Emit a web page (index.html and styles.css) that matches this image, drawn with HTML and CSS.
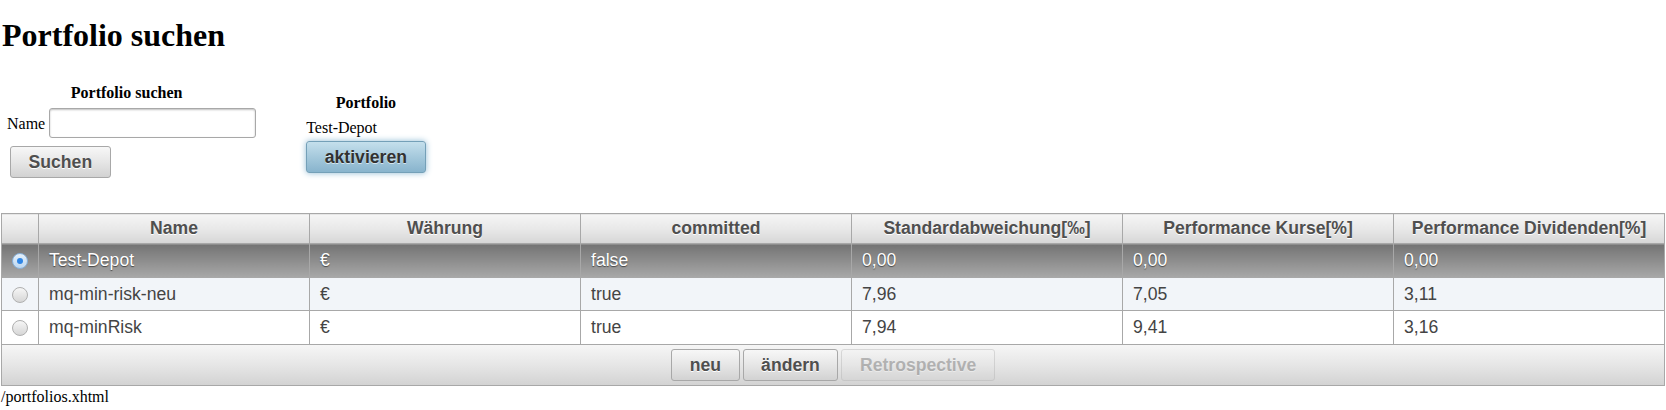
FILE: index.html
```html
<!DOCTYPE html>
<html>
<head>
<meta charset="utf-8">
<title>Portfolio suchen</title>
<link rel="stylesheet" href="styles.css">
</head>
<body>
<h1 class="title">Portfolio suchen</h1>
<div class="forms">
  <div class="panel search">
    <div class="panel-head search-head">Portfolio suchen</div>
    <div class="field-row">
      <label class="lbl">Name</label>
      <input class="inp" type="text">
    </div>
    <button class="btn btn-gray btn-search">Suchen</button>
  </div>
  <div class="panel current">
    <div class="panel-head">Portfolio</div>
    <div class="current-name">Test-Depot</div>
    <button class="btn btn-blue">aktivieren</button>
  </div>
</div>

<div class="datatable">
  <table class="grid">
    <colgroup><col class="c-sel"><col><col><col><col><col><col></colgroup>
    <thead>
      <tr>
        <th></th>
        <th>Name</th>
        <th>Währung</th>
        <th>committed</th>
        <th>Standardabweichung[‰]</th>
        <th>Performance Kurse[%]</th>
        <th>Performance Dividenden[%]</th>
      </tr>
    </thead>
    <tbody>
      <tr class="row-selected">
        <td class="sel"><span class="radio radio-on"><span class="dot"></span></span></td>
        <td>Test-Depot</td>
        <td>€</td>
        <td>false</td>
        <td>0,00</td>
        <td>0,00</td>
        <td>0,00</td>
      </tr>
      <tr class="row-odd">
        <td class="sel"><span class="radio"></span></td>
        <td>mq-min-risk-neu</td>
        <td>€</td>
        <td>true</td>
        <td>7,96</td>
        <td>7,05</td>
        <td>3,11</td>
      </tr>
      <tr class="row-even">
        <td class="sel"><span class="radio"></span></td>
        <td>mq-minRisk</td>
        <td>€</td>
        <td>true</td>
        <td>7,94</td>
        <td>9,41</td>
        <td>3,16</td>
      </tr>
    </tbody>
  </table>
  <div class="dt-footer">
    <button class="btn btn-gray">neu</button>
    <button class="btn btn-gray">ändern</button>
    <button class="btn btn-gray btn-disabled" disabled>Retrospective</button>
  </div>
</div>
<div class="path">/portfolios.xhtml</div>
</body>
</html>
```

FILE: styles.css
```css
html, body {
  margin: 0;
  background: #fff;
}
body {
  padding: 0 1px;
  font-family: "Liberation Serif", "Times New Roman", serif;
  font-size: 16px;
  color: #000;
}
.title {
  margin: 17px 0 0 1px;
  font-size: 32px;
  line-height: 37px;
  font-weight: bold;
}
.forms {
  display: flex;
  align-items: center;
  gap: 50px;
  padding: 30px 0 0 6px;
}
.panel {
  display: flex;
  flex-direction: column;
  align-items: flex-start;
}
.panel-head {
  align-self: stretch;
  text-align: center;
  font-weight: bold;
  line-height: 18px;
}
.search-head {
  padding-right: 10px;
}
.field-row {
  display: flex;
  align-items: center;
  gap: 4px;
  margin-top: 6px;
}
.lbl {
  line-height: 18px;
  padding-top: 1px;
}
.inp {
  box-sizing: border-box;
  width: 207px;
  height: 30px;
  margin: 0;
  padding: 4px;
  border: 1px solid #a8a8a8;
  border-radius: 3px;
  box-shadow: inset 0 1px 2px rgba(0,0,0,0.25);
  font-family: "Liberation Sans", Arial, sans-serif;
  font-size: 17.6px;
  background: #fff;
}
.current {
  padding-top: 4px;
}
.current-name {
  margin-top: 7px;
  line-height: 18px;
}
.btn {
  box-sizing: border-box;
  height: 32px;
  margin: 0;
  padding: 0 17.6px;
  border: 1px solid #a8a8a8;
  border-radius: 3px;
  font-family: "Liberation Sans", Arial, sans-serif;
  font-size: 17.6px;
  font-weight: bold;
  line-height: 20px;
  color: #4f4f4f;
  text-shadow: 0 1px 0 #fff;
  cursor: pointer;
}
.btn-gray {
  background: linear-gradient(to bottom, #f7f7f7 0%, #e6e6e6 50%, #d2d2d2 100%);
}
.btn-search {
  margin: 8px 0 0 3px;
}
.btn-blue {
  margin-top: 4px;
  border-color: #74a0b8;
  color: #313131;
  text-shadow: 0 1px 0 rgba(255,255,255,0.6);
  background: linear-gradient(to bottom, #c4dfec 0%, #a5c9dc 50%, #88b4cd 100%);
  box-shadow: 0 0 6px #8fbbd4;
}
.btn-disabled {
  opacity: 0.35;
  cursor: default;
}

.datatable {
  margin-top: 35px;
  font-family: "Liberation Sans", Arial, sans-serif;
  font-size: 17.6px;
}
.grid {
  width: 100%;
  border-collapse: collapse;
  table-layout: fixed;
}
.c-sel {
  width: 37px;
}
.grid th,
.grid td {
  border: 1px solid #a8a8a8;
  padding: 0 10px;
  overflow: hidden;
  white-space: nowrap;
}
.grid th {
  height: 29px;
  line-height: 21px;
  padding-top: 4px;
  padding-bottom: 4px;
  box-sizing: border-box;
  font-weight: bold;
  color: #4f4f4f;
  text-shadow: 0 1px 0 #fff;
  text-align: center;
  background: linear-gradient(to bottom, #f6f6f6 0%, #e8e8e8 50%, #d6d6d6 100%);
}
.grid td {
  padding-top: 6px;
  padding-bottom: 6px;
  line-height: 21px;
  color: #444;
  text-align: left;
}
.grid td.sel {
  padding: 0;
  text-align: center;
  vertical-align: middle;
}
.row-selected td {
  color: #fff;
  text-shadow: 0 1px 1px rgba(0,0,0,0.55);
  background: linear-gradient(to bottom, #747474 0%, #8b8b8b 45%, #a8a8a8 100%);
}
.row-odd td {
  padding-bottom: 5px;
  background: #f2f5f9;
}
.row-even td {
  background: #fff;
}
.radio {
  display: inline-block;
  box-sizing: border-box;
  width: 16px;
  height: 16px;
  border: 1px solid #b0b0b0;
  border-radius: 50%;
  background: linear-gradient(to bottom, #f6f6f6, #d6d6d6);
  vertical-align: middle;
  position: relative;
}
.radio-on {
  border-color: #86aed6;
  background: linear-gradient(to bottom, #e4f0fb, #bcd7f1);
}
.dot {
  position: absolute;
  left: 4px;
  top: 4px;
  width: 6px;
  height: 6px;
  border-radius: 50%;
  background: #2f86e6;
}
.dt-footer {
  display: flex;
  justify-content: center;
  gap: 3px;
  padding: 4px;
  border: 1px solid #a8a8a8;
  border-top: 0;
  background: linear-gradient(to bottom, #f6f6f6 0%, #e6e6e6 50%, #d3d3d3 100%);
}
.path {
  margin-top: 2px;
  line-height: 18px;
}
```
